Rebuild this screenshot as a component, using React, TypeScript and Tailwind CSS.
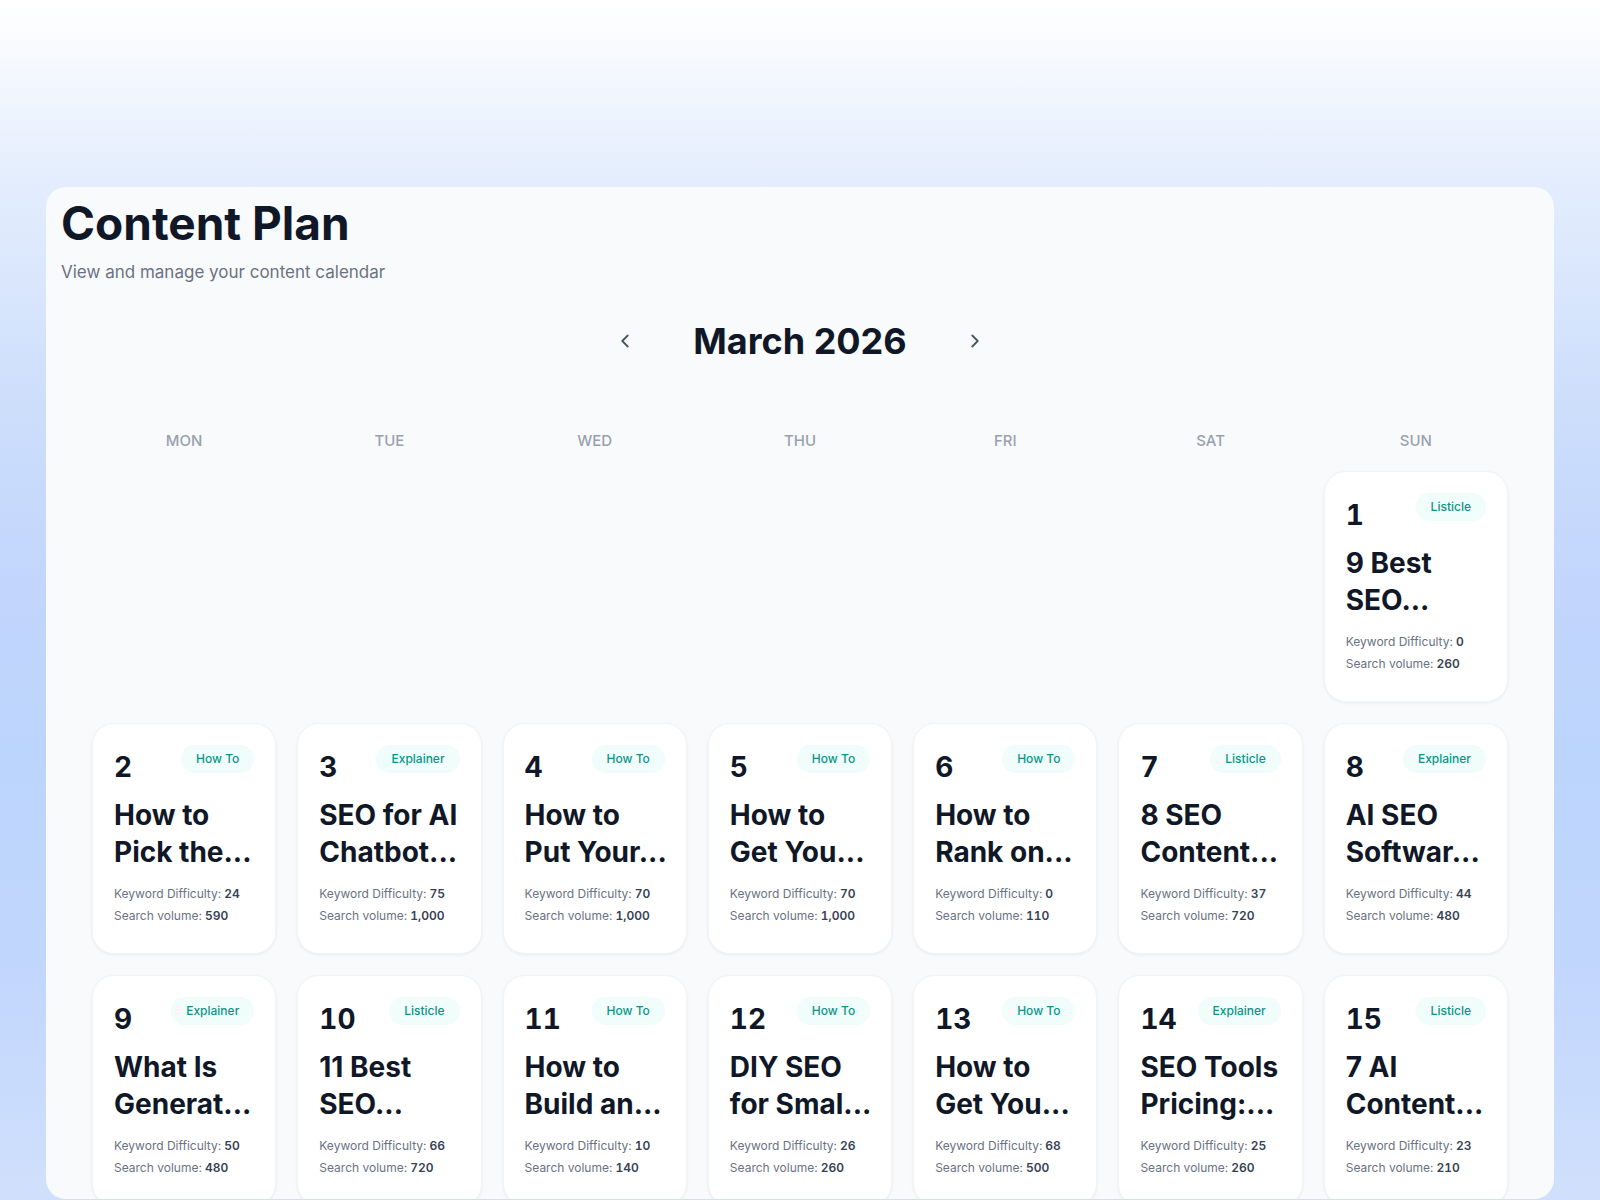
import { ChevronLeft, ChevronRight } from 'lucide-react'

type ArticleType = 'How To' | 'Explainer' | 'Listicle'

interface Article {
  day: number
  type: ArticleType
  title: [string, string]
  difficulty: number
  volume: number
}

const WEEKDAYS = ['MON', 'TUE', 'WED', 'THU', 'FRI', 'SAT', 'SUN']

const ARTICLES: Article[] = [
  { day: 1, type: 'Listicle', title: ['9 Best', 'SEO...'], difficulty: 0, volume: 260 },
  { day: 2, type: 'How To', title: ['How to', 'Pick the...'], difficulty: 24, volume: 590 },
  { day: 3, type: 'Explainer', title: ['SEO for AI', 'Chatbot...'], difficulty: 75, volume: 1000 },
  { day: 4, type: 'How To', title: ['How to', 'Put Your...'], difficulty: 70, volume: 1000 },
  { day: 5, type: 'How To', title: ['How to', 'Get You...'], difficulty: 70, volume: 1000 },
  { day: 6, type: 'How To', title: ['How to', 'Rank on...'], difficulty: 0, volume: 110 },
  { day: 7, type: 'Listicle', title: ['8 SEO', 'Content...'], difficulty: 37, volume: 720 },
  { day: 8, type: 'Explainer', title: ['AI SEO', 'Softwar...'], difficulty: 44, volume: 480 },
  { day: 9, type: 'Explainer', title: ['What Is', 'Generat...'], difficulty: 50, volume: 480 },
  { day: 10, type: 'Listicle', title: ['11 Best', 'SEO...'], difficulty: 66, volume: 720 },
  { day: 11, type: 'How To', title: ['How to', 'Build an...'], difficulty: 10, volume: 140 },
  { day: 12, type: 'How To', title: ['DIY SEO', 'for Smal...'], difficulty: 26, volume: 260 },
  { day: 13, type: 'How To', title: ['How to', 'Get You...'], difficulty: 68, volume: 500 },
  { day: 14, type: 'Explainer', title: ['SEO Tools', 'Pricing:...'], difficulty: 25, volume: 260 },
  { day: 15, type: 'Listicle', title: ['7 AI', 'Content...'], difficulty: 23, volume: 210 },
]

// ─── Day card ───

function DayCard({ article }: { article: Article }) {
  return (
    <article className="h-[231px] min-w-0 rounded-[22px] border border-gray-100 bg-white p-[21px] shadow-[0_1px_3px_rgba(15,23,42,0.07)] first:col-start-7">
      <div className="flex h-[52px] items-start justify-between">
        <span className="pt-px text-[28px] leading-[42px] font-bold text-gray-900 tabular-nums">{article.day}</span>
        <span className="rounded-full bg-[#f0fdfa] px-[15px] text-[12px] leading-7 font-medium whitespace-nowrap text-[#0d9488]">
          {article.type}
        </span>
      </div>
      <h3 className="text-[28px] leading-[37px] font-bold whitespace-nowrap text-gray-900">
        {article.title[0]}
        <br />
        {article.title[1]}
      </h3>
      <dl className="mt-3 text-[12px] leading-[22px] whitespace-nowrap text-gray-500">
        <div className="flex gap-[3px]">
          <dt>Keyword Difficulty:</dt>
          <dd className="font-semibold text-gray-700 tabular-nums">{article.difficulty}</dd>
        </div>
        <div className="flex gap-[3px]">
          <dt>Search volume:</dt>
          <dd className="font-semibold text-gray-700 tabular-nums">{article.volume.toLocaleString('en-US')}</dd>
        </div>
      </dl>
    </article>
  )
}

// ─── Page ───

export default function App() {
  return (
    <div className="h-screen overflow-hidden bg-[linear-gradient(to_bottom,#ffffff_0%,#e2ecfd_16%,#cddefb_34%,#c1d5fd_50%,#bcd5fc_64%,#c1d6fd_80%,#d0e0fc_100%)] px-[46px] pt-[187px] pb-px font-['Inter',sans-serif]">
      <main className="h-full overflow-hidden rounded-[20px] bg-[#f9fafc]">
        <header className="px-[15px] pt-2">
          <h1 className="text-[46px] leading-14 font-bold text-gray-900">Content Plan</h1>
          <p className="mt-1 text-[17px] leading-[34px] text-gray-500">View and manage your content calendar</p>
        </header>

        <div className="mt-[30px] flex items-center justify-center gap-[46px]">
          <button aria-label="Previous month" className="flex size-11 items-center justify-center text-gray-600">
            <ChevronLeft size={22} />
          </button>
          <h2 className="text-4xl leading-[44px] font-bold text-gray-900">March 2026</h2>
          <button aria-label="Next month" className="flex size-11 items-center justify-center text-gray-600">
            <ChevronRight size={22} />
          </button>
        </div>

        <div className="mt-[66px] grid grid-cols-7 gap-x-[21px] px-[46px] text-center text-[15px] leading-6 font-medium text-gray-400">
          {WEEKDAYS.map(day => (
            <span key={day}>{day}</span>
          ))}
        </div>

        <div className="mt-[18px] grid grid-cols-7 gap-[21px] px-[46px]">
          {ARTICLES.map(article => (
            <DayCard key={article.day} article={article} />
          ))}
        </div>
      </main>
    </div>
  )
}
